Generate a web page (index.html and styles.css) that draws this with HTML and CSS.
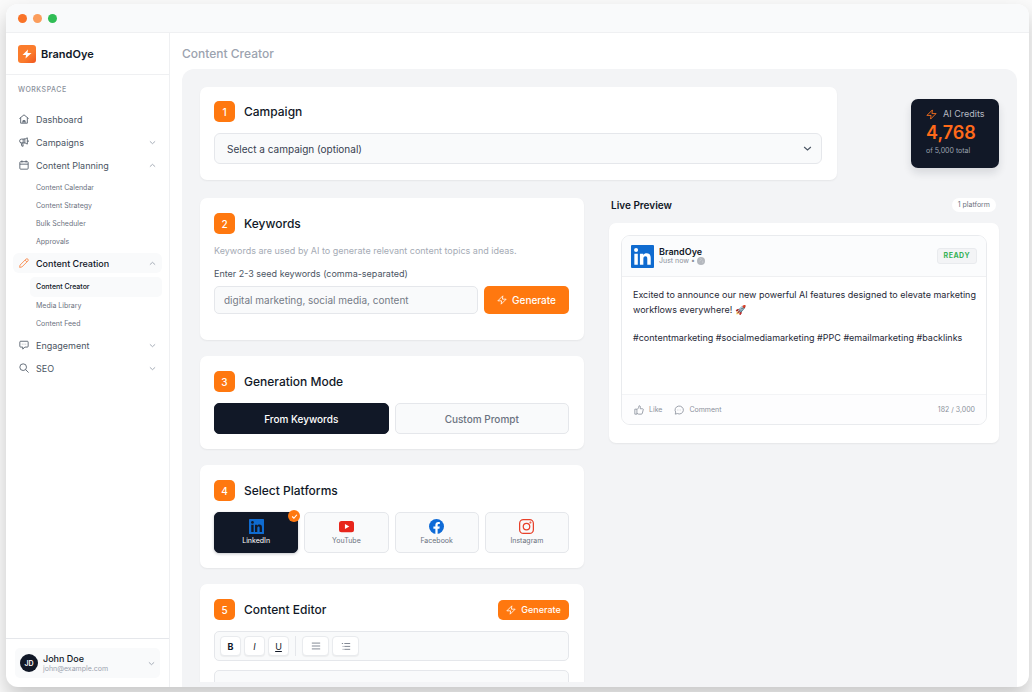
FILE: index.html
```html
<!DOCTYPE html>
<html lang="en">
<head>
<meta charset="UTF-8">
<meta name="viewport" content="width=device-width, initial-scale=1.0">
<title>BrandOye - Content Creator</title>
<link rel="stylesheet" href="styles.css">
</head>
<body>

<!-- shared icons -->
<svg class="sprite" aria-hidden="true">
    <symbol id="bolt" viewBox="0 0 24 24"><path d="M14 2 2 14h9l-1 8 12-12h-9z"/></symbol>
    <symbol id="down" viewBox="0 0 24 24"><path d="m3 8 9 8 9-8"/></symbol>
    <symbol id="up" viewBox="0 0 24 24"><path d="m3 16 9-8 9 8"/></symbol>
</svg>

<div class="window">
    <div class="titlebar">
        <span class="dot dot-red"></span>
        <span class="dot dot-amber"></span>
        <span class="dot dot-green"></span>
    </div>

    <div class="layout">
        <aside class="sidebar">
            <div class="brand">
                <span class="brand-logo"><svg viewBox="0 0 24 24"><path d="M14 3 3 14h7l-1 7 12-11h-8z"/></svg></span>
                BrandOye
            </div>
            <nav class="nav">
                <p class="nav-label">WORKSPACE</p>
                <a href="#" class="nav-item">
                    <svg class="icon" viewBox="0 0 24 24"><path d="M1 11 12 2l11 9M4 9v13h16V9M9 17.500h6M9.500 22v-6h5v6"/></svg>
                    Dashboard
                </a>
                <button type="button" class="nav-item">
                    <svg class="icon" viewBox="0 0 24 24"><path d="M10 5H6a4.500 4.500 0 0 0 0 9h4zM10 5c4 0 7-1 10-3v15c-3-2-6-3-10-3M5 14l2 8h3l-1-8M14 4.500v10M22 8v4"/></svg>
                    Campaigns
                    <svg class="chevron"><use href="#down"/></svg>
                </button>
                <button type="button" class="nav-item">
                    <svg class="icon" viewBox="0 0 24 24"><path d="M7 1v5M17 1v5M2 10h20M4 4h16a2 2 0 0 1 2 2v14a2 2 0 0 1-2 2H4a2 2 0 0 1-2-2V6a2 2 0 0 1 2-2z"/></svg>
                    Content Planning
                    <svg class="chevron"><use href="#up"/></svg>
                </button>
                <div class="subnav">
                    <a href="#">Content Calendar</a>
                    <a href="#">Content Strategy</a>
                    <a href="#">Bulk Scheduler</a>
                    <a href="#">Approvals</a>
                </div>
                <button type="button" class="nav-item active">
                    <svg class="icon" viewBox="0 0 24 24"><path d="M17 2.500a3.200 3.200 0 0 1 4.500 4.500L7 21.500 1.500 22.500 2.500 17zM14.500 5l4.500 4.500"/></svg>
                    Content Creation
                    <svg class="chevron"><use href="#up"/></svg>
                </button>
                <div class="subnav">
                    <a href="#" class="active">Content Creator</a>
                    <a href="#">Media Library</a>
                    <a href="#">Content Feed</a>
                </div>
                <button type="button" class="nav-item">
                    <svg class="icon" viewBox="0 0 24 24"><path d="M4 3h16a2 2 0 0 1 2 2v10a2 2 0 0 1-2 2h-6l-5 5v-5H4a2 2 0 0 1-2-2V5a2 2 0 0 1 2-2zM7 10h1M11.500 10h1M16 10h1"/></svg>
                    Engagement
                    <svg class="chevron"><use href="#down"/></svg>
                </button>
                <button type="button" class="nav-item">
                    <svg class="icon" viewBox="0 0 24 24"><circle cx="10" cy="10" r="8"/><path d="m16 16 7 7"/></svg>
                    SEO
                    <svg class="chevron"><use href="#down"/></svg>
                </button>
            </nav>
            <div class="sidebar-footer">
                <button type="button" class="user">
                    <span class="avatar">JD</span>
                    <span class="user-text">
                        <span class="user-name">John Doe</span>
                        <span class="user-email">john@example.com</span>
                    </span>
                    <svg class="chevron"><use href="#down"/></svg>
                </button>
            </div>
        </aside>

        <main class="main">
            <h1 class="page-title">Content Creator</h1>
            <div class="panel">
                <div class="scroll">
                    <div class="top-row">
                        <section class="card campaign">
                            <div class="card-head">
                                <span class="step">1</span>
                                <h2><label for="campaign">Campaign</label></h2>
                            </div>
                            <div class="select-wrap">
                                <select id="campaign">
                                    <option>Select a campaign (optional)</option>
                                </select>
                                <svg class="select-arrow"><use href="#down"/></svg>
                            </div>
                        </section>
                        <div class="credits">
                            <div class="credits-label"><svg><use href="#bolt"/></svg>AI Credits</div>
                            <div class="credits-value">4,768</div>
                            <div class="credits-total">of 5,000 total</div>
                        </div>
                    </div>

                    <div class="columns">
                        <div class="steps">
                            <section class="card keywords">
                                <div class="card-head">
                                    <span class="step">2</span>
                                    <h2>Keywords</h2>
                                </div>
                                <p class="hint">Keywords are used by AI to generate relevant content topics and ideas.</p>
                                <label class="field-label" for="keywords">Enter 2-3 seed keywords (comma-separated)</label>
                                <div class="keyword-row">
                                    <input type="text" id="keywords" placeholder="digital marketing, social media, content">
                                    <button type="button" class="btn-primary"><svg><use href="#bolt"/></svg>Generate</button>
                                </div>
                            </section>

                            <section class="card">
                                <div class="card-head">
                                    <span class="step">3</span>
                                    <h2>Generation Mode</h2>
                                </div>
                                <div class="modes">
                                    <button type="button" class="mode selected">From Keywords</button>
                                    <button type="button" class="mode">Custom Prompt</button>
                                </div>
                            </section>

                            <section class="card">
                                <div class="card-head">
                                    <span class="step">4</span>
                                    <h2>Select Platforms</h2>
                                </div>
                                <div class="platforms">
                                    <button type="button" class="platform selected">
                                        <svg viewBox="0 0 24 24"><rect width="24" height="24" rx="1" fill="#0f6bd0"/><g fill="#111827"><circle cx="5.500" cy="5.500" r="2.200"/><path d="M3.600 9.200h3.800v11.400H3.600zM9.600 9.200h3.500v1.600c.7-1.200 2-1.900 3.500-1.900 3.200 0 4.100 2 4.100 5v6.700H17v-6c0-1.600-.3-2.700-1.700-2.700s-2 1-2 2.700v6H9.600z"/></g></svg>
                                        LinkedIn
                                        <span class="tick"><svg viewBox="0 0 24 24"><path d="m4 12 6 6 10-12"/></svg></span>
                                    </button>
                                    <button type="button" class="platform">
                                        <svg viewBox="0 0 24 24"><rect y="3" width="24" height="18" rx="4" fill="#e8261c"/><path d="M9.500 8v8l7-4z" fill="#fff"/></svg>
                                        YouTube
                                    </button>
                                    <button type="button" class="platform">
                                        <svg viewBox="0 0 24 24"><circle cx="12" cy="12" r="12" fill="#0f6bd7"/><path d="M10.200 24v-8.500H7V12h3.200V9.300c0-3 1.800-4.700 4.500-4.700 1.300 0 2.600.2 2.600.2v3h-1.500c-1.500 0-2 .9-2 1.900V12h3.400l-.6 3.500h-2.800V24z" fill="#fff"/></svg>
                                        Facebook
                                    </button>
                                    <button type="button" class="platform">
                                        <svg viewBox="0 0 24 24" fill="none" stroke="#e8402a" stroke-width="2"><rect x="1" y="1" width="22" height="22" rx="6"/><circle cx="12" cy="12" r="5.200"/><circle cx="18.300" cy="5.700" r=".6"/></svg>
                                        Instagram
                                    </button>
                                </div>
                            </section>

                            <section class="card">
                                <div class="card-head">
                                    <span class="step">5</span>
                                    <h2><label for="editor">Content Editor</label></h2>
                                    <button type="button" class="btn-primary small"><svg><use href="#bolt"/></svg>Generate</button>
                                </div>
                                <div class="toolbar">
                                    <button type="button" class="tool"><b>B</b></button>
                                    <button type="button" class="tool"><i>I</i></button>
                                    <button type="button" class="tool"><u>U</u></button>
                                    <span class="divider"></span>
                                    <button type="button" class="tool wide" aria-label="Bulleted list"><svg viewBox="0 0 24 24"><path d="M2 5h20M2 12h20M2 19h20"/></svg></button>
                                    <button type="button" class="tool wide" aria-label="Numbered list"><svg viewBox="0 0 24 24"><path d="M8 6h14M8 13h14M8 20h14M2 6h3M4 13h2M4 20h2"/></svg></button>
                                </div>
                                <textarea id="editor" rows="8"></textarea>
                            </section>
                        </div>

                        <div class="preview">
                            <div class="preview-head">
                                <h3>Live Preview</h3>
                                <span class="pill">1 platform</span>
                            </div>
                            <div class="preview-card">
                                <article class="post">
                                    <header class="post-head">
                                        <svg class="post-logo" viewBox="0 0 24 24"><rect width="24" height="24" rx="1" fill="#0f6bd0"/><g fill="#fff"><circle cx="5.300" cy="5.300" r="2.100"/><path d="M3.500 9h3.600v11.500H3.500zM9.300 9h3.500v1.600c.7-1.200 2-1.900 3.500-1.900 3.300 0 4.300 2 4.300 5.100v6.700H17v-6c0-1.600-.3-2.800-1.900-2.800s-2.200 1.100-2.200 2.800v6H9.300z"/></g></svg>
                                        <div class="post-author">
                                            <strong>BrandOye</strong>
                                            <span>Just now • <svg viewBox="0 0 24 24"><circle cx="12" cy="12" r="12" fill="#b4b8be"/><path d="M8 5c3-2 6 0 5 3s-5 1-5 5M15 12c3 0 4 3 1 6" fill="none" stroke="#c9ccd1" stroke-width="3"/></svg></span>
                                        </div>
                                        <span class="ready">READY</span>
                                    </header>
                                    <div class="post-body">
                                        <p>Excited to announce our new powerful AI features designed to elevate marketing workflows everywhere! 🚀</p>
                                        <p>#contentmarketing #socialmediamarketing #PPC #emailmarketing #backlinks</p>
                                    </div>
                                    <footer class="post-foot">
                                        <button type="button"><svg viewBox="0 0 24 24"><path d="M2 10h5v12H2zM7 11l4-4 1-5c3-1 4 2 3 7h5c2 0 3 1 2 3l-2 8c0 1-1 2-3 2h-6l-4-2"/></svg>Like</button>
                                        <button type="button"><svg viewBox="0 0 24 24"><path d="M3 22l1-5a10 9.500 0 1 1 4 3.500zM7.500 12h.8M11.600 12h.8M15.700 12h.8"/></svg>Comment</button>
                                        <span class="count">182 / 3,000</span>
                                    </footer>
                                </article>
                            </div>
                        </div>
                    </div>
                </div>
            </div>
        </main>
    </div>
</div>

</body>
</html>
```

FILE: styles.css
```css
* {
  box-sizing: border-box;
}
body {
  margin: 0;
  height: 100vh;
  padding: 4px 3px 5px 6px;
  background: #fafafa;
  font-family: Inter, "Liberation Sans", sans-serif;
  font-size: 9px;
  color: #111827;
  overflow: hidden;
}
h1, h2, h3, p {
  margin: 0;
}
button, input, select, textarea {
  font: inherit;
  color: inherit;
}
button {
  padding: 0;
  border: none;
  background: none;
  cursor: pointer;
}
a {
  color: inherit;
  text-decoration: none;
}
svg {
  flex: none;
}
.sprite {
  display: none;
}

/* window */
.window {
  height: 100%;
  display: flex;
  flex-direction: column;
  background: #fff;
  border-radius: 12px;
  box-shadow: 0 10px 20px rgba(0, 0, 0, 0.2);
  overflow: hidden;
}
.titlebar {
  flex: none;
  display: flex;
  align-items: center;
  gap: 6px;
  height: 29px;
  padding: 0 12px;
  background: #f9fafb;
  border-bottom: 1px solid #eff0f2;
}
.dot {
  width: 9px;
  height: 9px;
  border-radius: 50%;
}
.dot-red {
  background: #f97328;
}
.dot-amber {
  background: #fb9d5c;
}
.dot-green {
  background: #30bd55;
}
.layout {
  flex: 1;
  display: flex;
  min-height: 0;
}

/* sidebar */
.sidebar {
  flex: none;
  display: flex;
  flex-direction: column;
  width: 164px;
  border-right: 1px solid #eff0f2;
}
.brand {
  display: flex;
  align-items: center;
  gap: 5px;
  height: 42px;
  padding: 0 12px;
  border-bottom: 1px solid #eff0f2;
  font-size: 11px;
  font-weight: 600;
}
.brand-logo {
  display: flex;
  align-items: center;
  justify-content: center;
  width: 18px;
  height: 18px;
  border-radius: 3px;
  background: linear-gradient(135deg, #fb7c2c 60%, #f0541e);
}
.brand-logo svg {
  width: 12px;
  height: 12px;
  fill: #fff;
}
.nav {
  flex: 1;
  padding: 9px 7px 0;
  color: #4b5563;
}
.nav-label {
  height: 25px;
  padding: 0 5px;
  font-size: 7px;
  font-weight: 500;
  line-height: 12px;
  letter-spacing: 0.5px;
  color: #8b919c;
}
.nav-item {
  display: flex;
  align-items: center;
  gap: 7px;
  width: 100%;
  height: 20px;
  margin-bottom: 3px;
  padding: 0 6px;
  border-radius: 6px;
  text-align: left;
}
.nav-item.active {
  background: #f9fafb;
  color: #111827;
  font-weight: 500;
}
.icon {
  width: 10px;
  height: 10px;
  fill: none;
  stroke: #4b5563;
  stroke-width: 2;
}
.active .icon {
  stroke: #f9823f;
}
.chevron {
  width: 7px;
  height: 7px;
  margin-left: auto;
  fill: none;
  stroke: #9ca3af;
  stroke-width: 3;
}
.subnav {
  margin: 0 0 2px 17px;
  padding-top: 1px;
}
.subnav a {
  display: block;
  padding-left: 6px;
  border-radius: 5px;
  font-size: 7px;
  line-height: 18px;
  color: #6b7280;
}
.subnav a.active {
  background: #f9fafb;
  line-height: 20px;
  font-weight: 500;
  color: #111827;
}
.sidebar-footer {
  padding: 9px;
  border-top: 1px solid #e5e7eb;
}
.user {
  display: flex;
  align-items: center;
  gap: 5px;
  width: 100%;
  height: 30px;
  padding: 0 5px;
  border-radius: 5px;
  background: #f9fafb;
  text-align: left;
}
.avatar {
  display: flex;
  align-items: center;
  justify-content: center;
  width: 18px;
  height: 18px;
  border-radius: 50%;
  background: #111827;
  color: #fff;
  font-size: 7px;
  font-weight: 600;
}
.user-text {
  display: flex;
  flex-direction: column;
}
.user-name {
  font-weight: 500;
  line-height: 11px;
}
.user-email {
  font-size: 7px;
  line-height: 9px;
  color: #9ca3af;
}

/* main */
.main {
  flex: 1;
  display: flex;
  flex-direction: column;
  min-width: 0;
  padding: 0 12px;
}
.page-title {
  flex: none;
  font-size: 12px;
  font-weight: 500;
  line-height: 16px;
  padding: 13px 0 7px;
  color: #9ca3af;
}
.panel {
  flex: 1;
  min-height: 0;
  padding-bottom: 5px;
  background: #f3f4f6;
  border-radius: 12px 12px 0 0;
}
.scroll {
  height: 100%;
  padding: 18px 18px 0;
  overflow: hidden;
}
.top-row {
  display: flex;
  align-items: center;
  justify-content: space-between;
  gap: 74px;
  margin-bottom: 18px;
}
.card {
  padding: 15px 15px 15px 14px;
  background: #fff;
  border-radius: 7px;
  box-shadow: 0 1px 2px rgba(0, 0, 0, 0.06);
}
.card-head {
  display: flex;
  align-items: center;
  gap: 9px;
  height: 21px;
  margin-bottom: 11px;
}
.card-head h2 {
  font-size: 12px;
  font-weight: 500;
}
.step {
  display: flex;
  align-items: center;
  justify-content: center;
  width: 21px;
  height: 21px;
  border-radius: 5px;
  background: #ff780f;
  color: #fff;
  font-size: 10px;
  font-weight: 500;
}
.campaign {
  flex: 1;
  padding-top: 14px;
  padding-bottom: 16px;
}
.select-wrap {
  position: relative;
}
.select-wrap select {
  display: block;
  width: 100%;
  height: 31px;
  padding: 0 12px;
  border: 1px solid #e5e7eb;
  border-radius: 6px;
  background: #f9fafb;
  appearance: none;
  font-size: 10px;
  color: #374151;
}
.select-arrow {
  position: absolute;
  top: 11px;
  right: 10px;
  width: 9px;
  height: 9px;
  fill: none;
  stroke: #4b5563;
  stroke-width: 3;
  pointer-events: none;
}
.credits {
  width: 88px;
  height: 69px;
  padding: 9px 15px;
  border-radius: 7px;
  background: #111827;
  box-shadow: 0 5px 8px rgba(17, 24, 39, 0.12);
}
.credits-label {
  display: flex;
  align-items: center;
  gap: 6px;
  line-height: 12px;
  white-space: nowrap;
  color: #b6bac2;
}
.credits-label svg {
  width: 11px;
  height: 11px;
  fill: none;
  stroke: #f9701e;
  stroke-width: 2;
}
.credits-value {
  font-size: 18px;
  font-weight: 600;
  line-height: 25px;
  color: #ff6a1a;
}
.credits-total {
  font-size: 7px;
  line-height: 12px;
  white-space: nowrap;
  color: #9ca3af;
}

/* steps */
.columns {
  display: grid;
  grid-template-columns: 384fr 390fr;
  gap: 25px;
  align-items: start;
}
.steps {
  display: flex;
  flex-direction: column;
  gap: 16px;
}
.keywords {
  padding-bottom: 26px;
}
.hint {
  line-height: 12px;
  margin-bottom: 10px;
  color: #a5abb5;
}
.field-label {
  display: block;
  line-height: 13px;
  margin-bottom: 6px;
  color: #4b5563;
}
.keyword-row {
  display: flex;
  gap: 6px;
}
.keyword-row input {
  flex: 1;
  min-width: 0;
  height: 28px;
  padding: 0 9px;
  border: 1px solid #e5e7eb;
  border-radius: 5px;
  background: #f9fafb;
  font-size: 10px;
}
.keyword-row input::placeholder {
  color: #757b86;
}
.btn-primary {
  display: flex;
  align-items: center;
  justify-content: center;
  gap: 5px;
  width: 85px;
  height: 28px;
  border-radius: 5px;
  background: #ff780f;
  color: #fff;
  font-size: 10px;
  font-weight: 500;
}
.btn-primary svg {
  width: 10px;
  height: 10px;
  fill: none;
  stroke: #fff;
  stroke-width: 2;
}
.btn-primary.small {
  width: 71px;
  height: 20px;
  margin-left: auto;
  font-size: 9px;
}
.modes {
  display: grid;
  grid-template-columns: 1fr 1fr;
  gap: 6px;
}
.mode {
  height: 31px;
  border: 1px solid #e5e7eb;
  border-radius: 5px;
  background: #f9fafb;
  color: #6b7280;
  font-size: 10px;
  font-weight: 500;
}
.mode.selected {
  border-color: #111827;
  background: #111827;
  color: #fff;
}
.platforms {
  display: grid;
  grid-template-columns: repeat(4, 1fr);
  gap: 6px;
}
.platform {
  position: relative;
  display: flex;
  flex-direction: column;
  align-items: center;
  justify-content: center;
  gap: 2px;
  height: 41px;
  border: 1px solid #e5e7eb;
  border-radius: 5px;
  background: #f9fafb;
  color: #6b7280;
  font-size: 7px;
  line-height: 10px;
}
.platform > svg {
  width: 15px;
  height: 15px;
}
.platform.selected {
  border-color: #111827;
  background: #111827;
  color: #fff;
  box-shadow: 0 1px 3px rgba(17, 24, 39, 0.25);
}
.tick {
  position: absolute;
  top: -3px;
  right: -3px;
  display: flex;
  align-items: center;
  justify-content: center;
  width: 12px;
  height: 12px;
  border-radius: 50%;
  background: #ff780f;
}
.tick svg {
  width: 7px;
  height: 7px;
  fill: none;
  stroke: #fff;
  stroke-width: 4;
}
.toolbar {
  display: flex;
  align-items: center;
  gap: 3px;
  height: 30px;
  margin-bottom: 9px;
  padding: 0 5px;
  border: 1px solid #e5e7eb;
  border-radius: 5px;
  background: #f9fafb;
}
.tool {
  display: flex;
  align-items: center;
  justify-content: center;
  width: 21px;
  height: 20px;
  border: 1px solid #e9ebee;
  border-radius: 4px;
  background: #fff;
  box-shadow: 0 1px 1px rgba(0, 0, 0, 0.05);
}
.tool.wide {
  width: 27px;
}
.tool svg {
  width: 10px;
  height: 10px;
  fill: none;
  stroke: #6b7280;
  stroke-width: 2;
}
.divider {
  width: 1px;
  height: 20px;
  margin: 0 3px;
  background: #e5e7eb;
}
textarea {
  display: block;
  width: 100%;
  padding: 9px;
  border: 1px solid #e5e7eb;
  border-radius: 5px;
  background: #f9fafb;
  resize: none;
}

/* preview */
.preview-head {
  display: flex;
  align-items: center;
  justify-content: space-between;
  margin-bottom: 11px;
  padding: 0 3px 0 2px;
}
.preview-head h3 {
  font-size: 10px;
  font-weight: 600;
}
.pill {
  padding: 0 6px;
  border-radius: 7px;
  background: #fff;
  font-size: 7px;
  line-height: 14px;
  color: #6b7280;
}
.preview-card {
  padding: 12px 12px 18px;
  background: #fff;
  border-radius: 7px;
  box-shadow: 0 1px 2px rgba(0, 0, 0, 0.06);
}
.post {
  border: 1px solid #e9ebee;
  border-radius: 9px;
  overflow: hidden;
}
.post-head {
  display: flex;
  align-items: center;
  gap: 5px;
  height: 41px;
  padding: 0 9px;
  background: #fbfcfd;
  border-bottom: 1px solid #eff0f2;
}
.post-logo {
  width: 23px;
  height: 23px;
}
.post-author {
  display: flex;
  flex-direction: column;
}
.post-author strong {
  font-weight: 600;
  line-height: 10px;
}
.post-author span {
  display: flex;
  align-items: center;
  gap: 2px;
  font-size: 7px;
  line-height: 8px;
  color: #8b919c;
}
.post-author svg {
  width: 8px;
  height: 8px;
}
.ready {
  margin-left: auto;
  padding: 0 6px;
  border: 1px solid #e9ebee;
  border-radius: 3px;
  background: #f3f4f6;
  font-size: 7px;
  font-weight: 700;
  line-height: 14px;
  letter-spacing: 0.5px;
  color: #35b257;
}
.post-body {
  min-height: 117px;
  padding: 10px 4px 0 11px;
  line-height: 15px;
  color: #1f2937;
}
.post-body p {
  margin-bottom: 13px;
}
.post-foot {
  display: flex;
  align-items: center;
  gap: 12px;
  height: 30px;
  padding: 0 11px 0 12px;
  border-top: 1px solid #f3f4f6;
  background: #fdfdfe;
  font-size: 7px;
  color: #8b919c;
}
.post-foot button {
  display: flex;
  align-items: center;
  gap: 5px;
}
.post-foot svg {
  width: 10px;
  height: 10px;
  fill: none;
  stroke: #8b919c;
  stroke-width: 2;
}
.count {
  margin-left: auto;
}
```
